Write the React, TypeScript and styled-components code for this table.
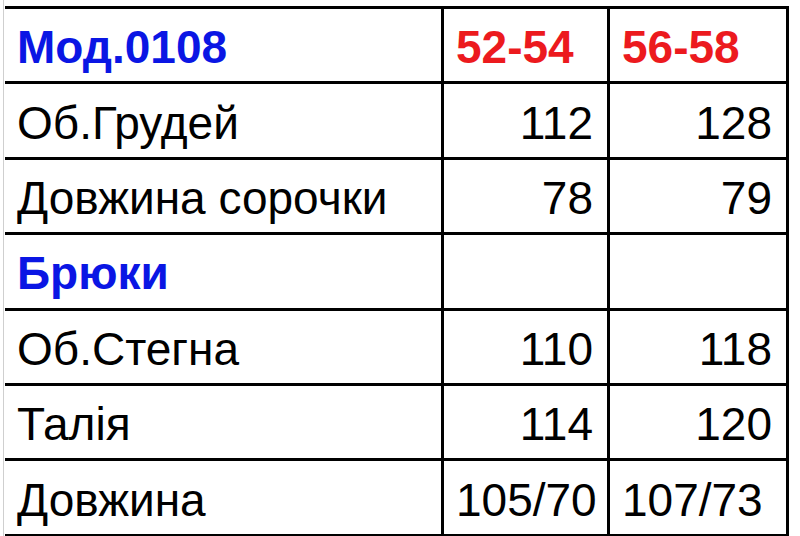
import React from 'react';
import styled, { createGlobalStyle } from 'styled-components';

const GlobalStyle = createGlobalStyle`
    html, body {
        margin: 0;
        padding: 0;
        background: #ffffff;
    }

    body {
        font-family: 'Liberation Sans', Arial, sans-serif;
    }
`;

const Sheet = styled.div`
    width: 800px;
    height: 536px;
    display: flex;
    overflow: hidden;
    background: #ffffff;
`;

const Gutter = styled.div`
    width: 3px;
    flex: none;
    border-right: 1px solid #cfcfcf;
    margin-right: 1px;
`;

const Table = styled.div`
    margin-top: 6px;
    display: grid;
    grid-template-columns: 439px 166px 179px;
    grid-auto-rows: 75.4px;
    border-top: 3px solid #000;
    align-self: flex-start;
`;

const Cell = styled.div<{ $align?: 'left' | 'right'; $color?: string; $bold?: boolean }>`
    display: flex;
    align-items: center;
    justify-content: ${(p) => (p.$align === 'right' ? 'flex-end' : 'flex-start')};
    padding: 4px 14px 0 12px;
    border-right: 3px solid #000;
    border-bottom: 3px solid #000;
    font-size: 46px;
    font-weight: ${(p) => (p.$bold ? 700 : 400)};
    color: ${(p) => p.$color || '#000'};
    white-space: nowrap;
    overflow: visible;

    &:nth-child(3n + 1) {
        border-right: 3px solid #000;
    }
`;

const BLUE = '#0a16e4';
const RED = '#ec1a1e';

type Row = {
    label: string;
    a: string;
    b: string;
    kind?: 'head' | 'section' | 'text';
};

const rows: Row[] = [
    { label: 'Мод.0108', a: '52-54', b: '56-58', kind: 'head' },
    { label: 'Об.Грудей', a: '112', b: '128' },
    { label: 'Довжина сорочки', a: '78', b: '79' },
    { label: 'Брюки', a: '', b: '', kind: 'section' },
    { label: 'Об.Стегна', a: '110', b: '118' },
    { label: 'Талія', a: '114', b: '120' },
    { label: 'Довжина', a: '105/70', b: '107/73', kind: 'text' },
];

const App = (): JSX.Element => {
    return (
        <>
            <GlobalStyle />
            <Sheet>
                <Gutter />
                <Table>
                    {rows.map((row) => {
                        const isHead = row.kind === 'head';
                        const isSection = row.kind === 'section';
                        const valueAlign = isHead || row.kind === 'text' ? 'left' : 'right';
                        return (
                            <React.Fragment key={row.label}>
                                <Cell $bold={isHead || isSection} $color={isHead || isSection ? BLUE : undefined}>
                                    {row.label}
                                </Cell>
                                <Cell $align={valueAlign} $bold={isHead} $color={isHead ? RED : undefined}>
                                    {row.a}
                                </Cell>
                                <Cell $align={valueAlign} $bold={isHead} $color={isHead ? RED : undefined}>
                                    {row.b}
                                </Cell>
                            </React.Fragment>
                        );
                    })}
                </Table>
            </Sheet>
        </>
    );
};

export default App;
